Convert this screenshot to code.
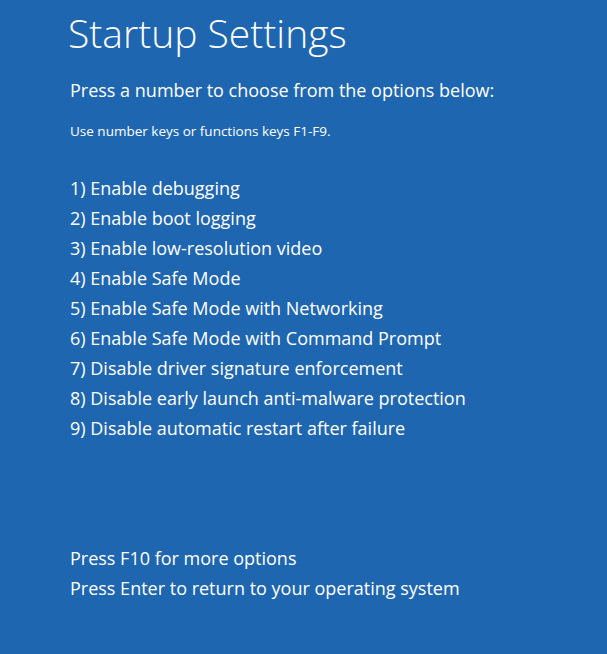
import React from 'react';

const OPTIONS = [
  '1) Enable debugging',
  '2) Enable boot logging',
  '3) Enable low-resolution video',
  '4) Enable Safe Mode',
  '5) Enable Safe Mode with Networking',
  '6) Enable Safe Mode with Command Prompt',
  '7) Disable driver signature enforcement',
  '8) Disable early launch anti-malware protection',
  '9) Disable automatic restart after failure',
];

export default function App() {
  return (
    <div className="w-[607px] h-[654px] bg-[#1f66b1] text-white font-['Open_Sans',sans-serif] pl-[70px] overflow-hidden">
      <h1 className="text-[39px] font-light leading-[48px] pt-[9px] -ml-[2px]">Startup Settings</h1>
      <p className="text-[18px] leading-[30px] mt-[18px]">Press a number to choose from the options below:</p>
      <p className="text-[13.5px] leading-[20px] mt-[16px]">Use number keys or functions keys F1-F9.</p>
      <ul className="mt-[32px] text-[18px] leading-[30px]">
        {OPTIONS.map((o) => (
          <li key={o}>{o}</li>
        ))}
      </ul>
      <div className="mt-[100px] text-[18px] leading-[30px]">
        <p>Press F10 for more options</p>
        <p>Press Enter to return to your operating system</p>
      </div>
    </div>
  );
}
